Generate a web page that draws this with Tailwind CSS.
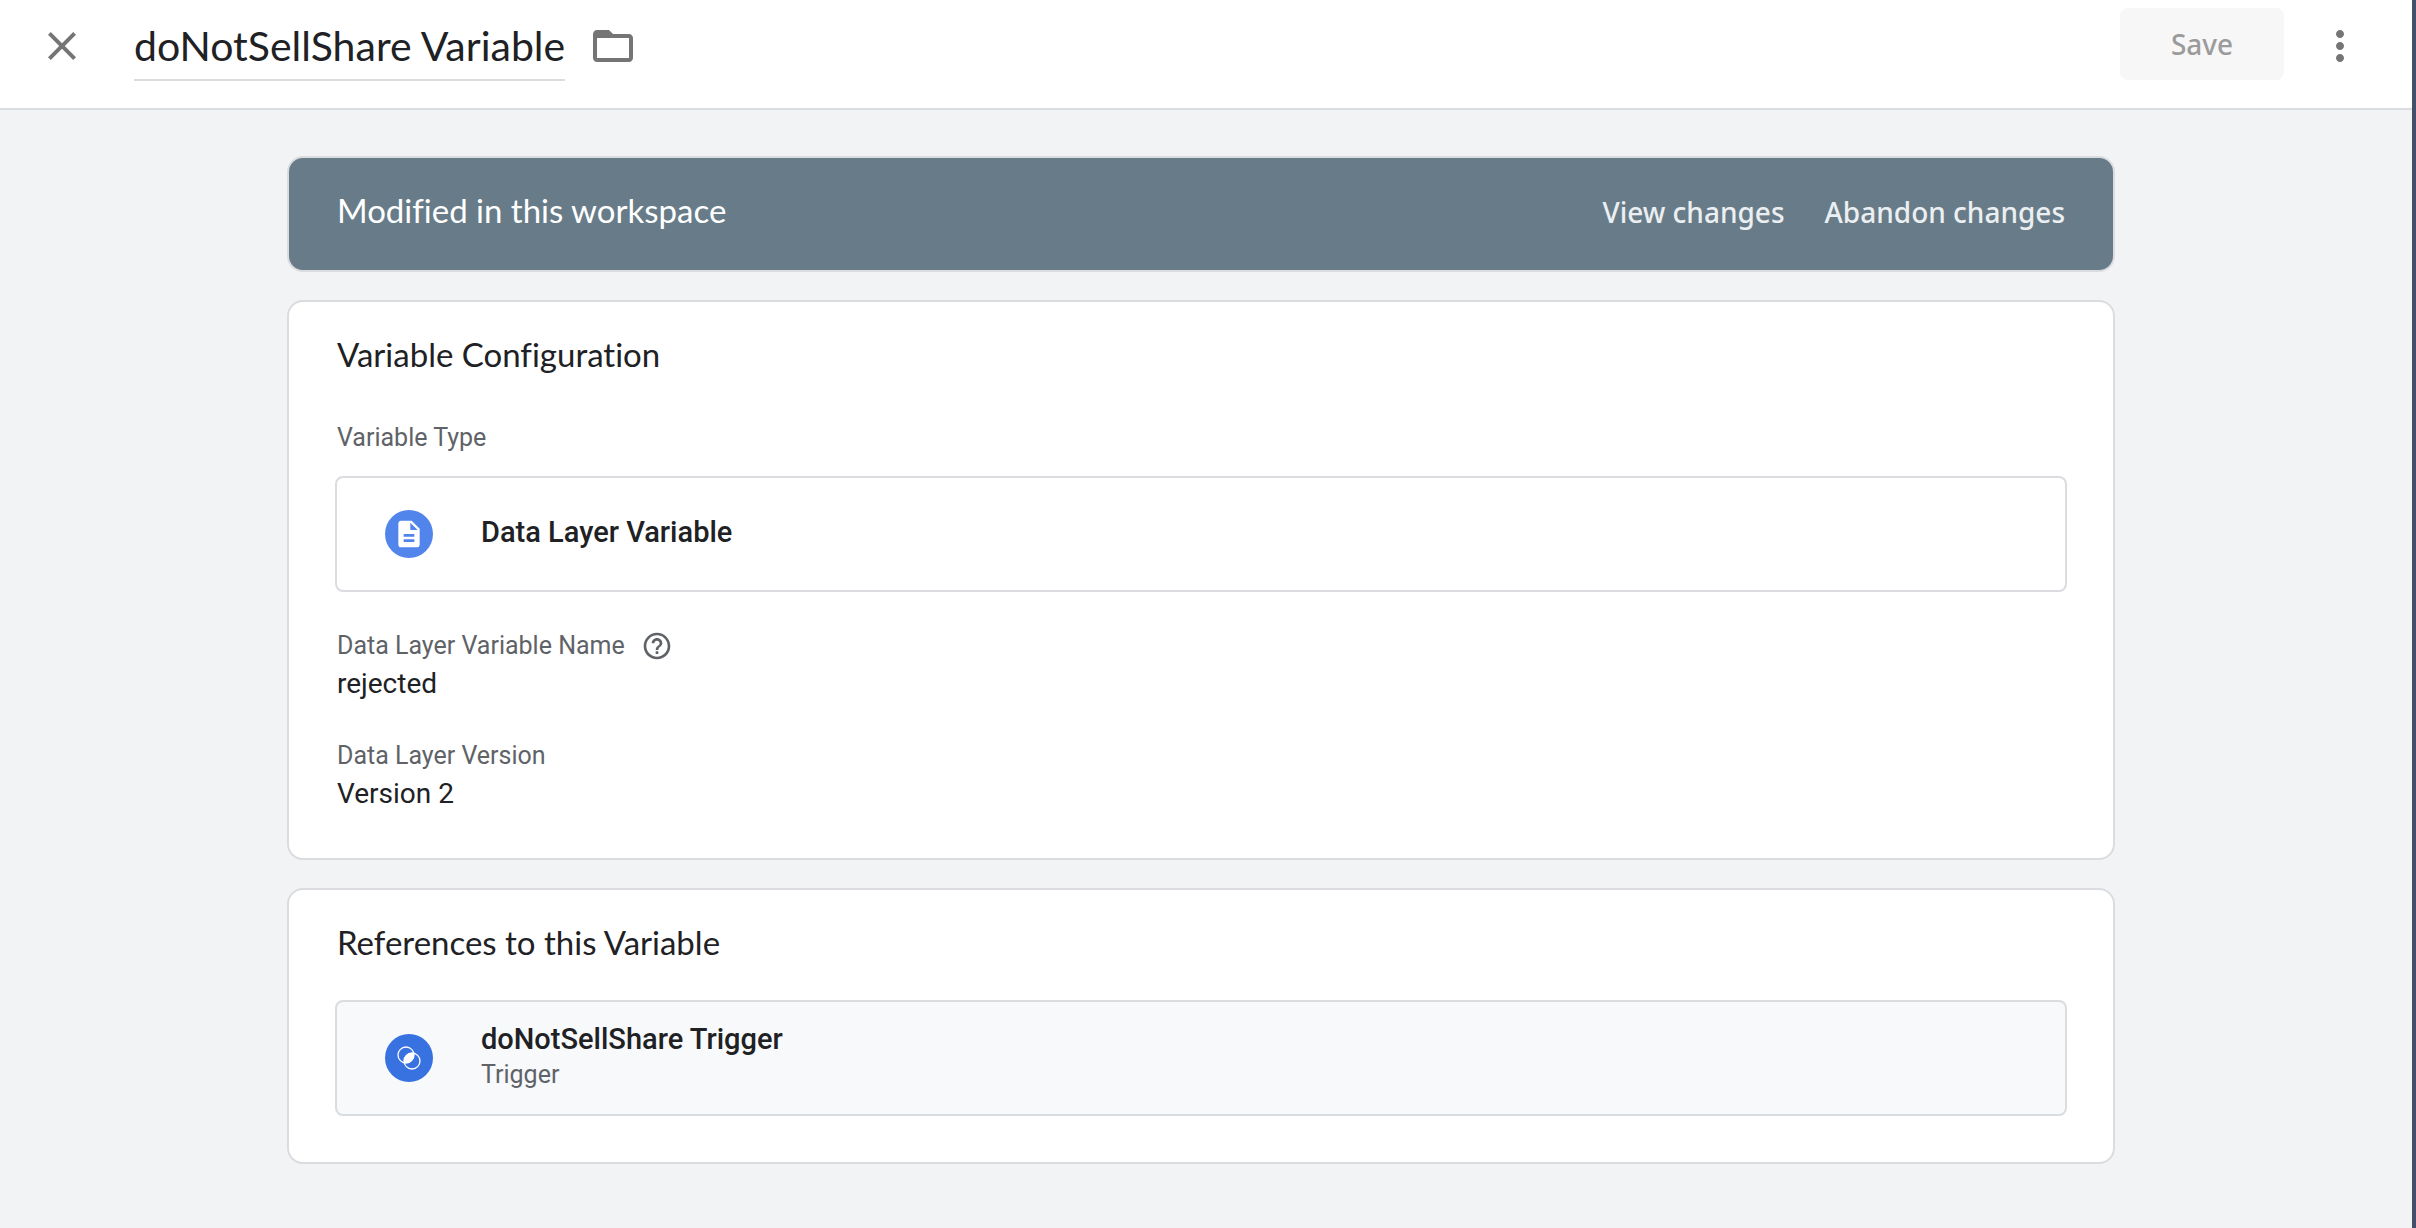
<!DOCTYPE html>
<html lang="en">
<head>
<meta charset="utf-8">
<meta name="viewport" content="width=device-width, initial-scale=1">
<title>doNotSellShare Variable</title>
<script src="https://cdn.jsdelivr.net/npm/@tailwindcss/browser@4"></script>
</head>
<body class="min-h-screen border-r-4 border-[#435069] bg-[#f1f3f4] font-[Roboto,sans-serif] text-[#202124] [font-variant-ligatures:none]">

<header class="flex h-[110px] items-start border-b-2 border-[#dadce0] bg-white pt-2 pr-12 pl-[38px]">
  <button type="button" aria-label="Close" class="mt-3.5 mr-12 shrink-0 text-[#757575]">
    <svg class="size-12" viewBox="0 0 24 24" fill="currentColor" aria-hidden="true"><path d="M19 6.41 17.59 5 12 10.59 6.41 5 5 6.41 10.59 12 5 17.59 6.41 19 12 13.41 17.59 19 19 17.59 13.41 12z"/></svg>
  </button>
  <input type="text" aria-label="Variable name" value="doNotSellShare Variable" class="mt-3 field-sizing-content h-[61px] border-b-2 border-[#dadce0] pb-2 font-[Lato,sans-serif] text-[41px] leading-[50px] outline-none">
  <button type="button" aria-label="Move to folder" class="mt-3.5 ml-6 shrink-0 text-[#757575]">
    <svg class="size-12" viewBox="0 0 24 24" fill="currentColor" aria-hidden="true"><path d="M20 6h-8l-2-2H4c-1.1 0-1.99.9-1.99 2L2 18c0 1.1.9 2 2 2h16c1.1 0 2-.9 2-2V8c0-1.1-.9-2-2-2zm0 12H4V8h16v10z"/></svg>
  </button>
  <button type="button" disabled class="ml-auto h-[72px] w-[164px] rounded-lg bg-[#f7f7f7] font-['Noto_Sans',sans-serif] text-[28px] font-medium text-[#9b9b9b]">Save</button>
  <button type="button" aria-label="More actions" class="mt-3.5 ml-8 shrink-0 text-[#757575]">
    <svg class="size-12" viewBox="0 0 24 24" fill="currentColor" aria-hidden="true"><path d="M12 8c1.1 0 2-.9 2-2s-.9-2-2-2-2 .9-2 2 .9 2 2 2zm0 2c-1.1 0-2 .9-2 2s.9 2 2 2 2-.9 2-2-.9-2-2-2zm0 6c-1.1 0-2 .9-2 2s.9 2 2 2 2-.9 2-2-.9-2-2-2z"/></svg>
  </button>
</header>

<main class="pt-[46px] pr-[10px] pb-16">
  <div class="mx-auto flex max-w-[1828px] flex-col gap-7">

    <section class="rounded-2xl border-2 border-[#dadce0] bg-[#677c88] px-12 pt-8 pb-[38px]">
      <div class="flex items-baseline justify-between">
        <h2 class="font-[Lato,sans-serif] text-[33px] leading-10 text-white">Modified in this workspace</h2>
        <div class="flex gap-10 font-['Noto_Sans',sans-serif] text-[28px] leading-10 font-medium text-[#eceff1]">
          <a href="#changes">View changes</a>
          <a href="#abandon">Abandon changes</a>
        </div>
      </div>
    </section>

    <section class="rounded-2xl border-2 border-[#dadce0] bg-white px-12 pt-8 pb-[46px]">
      <h2 class="font-[Lato,sans-serif] text-[33px] leading-10">Variable Configuration</h2>
      <p class="mt-12 text-[25px] leading-8 text-[#5f6368]">Variable Type</p>
      <div class="-mx-0.5 mt-[22px] flex h-[116px] items-center gap-12 rounded-lg border-2 border-[#dadce0] px-12">
        <span class="flex size-12 items-center justify-center rounded-full bg-[#5185ec] text-white">
          <svg class="size-8" viewBox="0 0 24 24" fill="currentColor" aria-hidden="true"><path d="M14 2H6c-1.1 0-1.99.9-1.99 2L4 20c0 1.1.89 2 1.99 2H18c1.1 0 2-.9 2-2V8l-6-6zm2 16H8v-2h8v2zm0-4H8v-2h8v2zm-3-5V3.5L18.5 9H13z"/></svg>
        </span>
        <div class="pb-1 text-[29px] leading-8 font-medium">Data Layer Variable</div>
      </div>
      <dl class="mt-[38px] flex flex-col gap-[38px]">
        <div>
          <dt class="flex items-center gap-4 text-[25px] leading-8 text-[#5f6368]">Data Layer Variable Name
            <button type="button" aria-label="Help">
              <svg class="size-8" viewBox="0 0 24 24" fill="currentColor" aria-hidden="true"><path d="M11 18h2v-2h-2v2zm1-16C6.48 2 2 6.48 2 12s4.48 10 10 10 10-4.48 10-10S17.52 2 12 2zm0 18c-4.41 0-8-3.59-8-8s3.59-8 8-8 8 3.59 8 8-3.59 8-8 8zm0-14c-2.21 0-4 1.79-4 4h2c0-1.1.9-2 2-2s2 .9 2 2c0 2-3 1.75-3 5h2c0-2.25 3-2.5 3-5 0-2.21-1.79-4-4-4z"/></svg>
            </button>
          </dt>
          <dd class="mt-1 text-[28px] leading-9">rejected</dd>
        </div>
        <div>
          <dt class="text-[25px] leading-8 text-[#5f6368]">Data Layer Version</dt>
          <dd class="mt-1 text-[28px] leading-9">Version 2</dd>
        </div>
      </dl>
    </section>

    <section class="rounded-2xl border-2 border-[#dadce0] bg-white px-12 pt-8 pb-[46px]">
      <h2 class="font-[Lato,sans-serif] text-[33px] leading-10">References to this Variable</h2>
      <a href="#trigger" class="-mx-0.5 mt-[38px] flex h-[116px] items-center gap-12 rounded-lg border-2 border-[#dadce0] bg-[#f8f9fb] px-12">
        <svg class="size-12" viewBox="0 0 48 48" aria-hidden="true">
          <circle cx="24" cy="24" r="24" fill="#3872e0"/>
          <g fill="none" stroke="#fff" stroke-width="1.3">
            <circle cx="21" cy="21" r="8"/>
            <circle cx="27" cy="27" r="8"/>
          </g>
          <path d="M28.8 19.2A8 8 0 0 1 19.2 28.8A8 8 0 0 1 28.8 19.2z" fill="#fff"/>
        </svg>
        <div class="pb-0.5">
          <div class="text-[29px] leading-8 font-medium">doNotSellShare Trigger</div>
          <div class="mt-1 text-[25px] leading-8 text-[#5f6368]">Trigger</div>
        </div>
      </a>
    </section>

  </div>
</main>
</body>
</html>
